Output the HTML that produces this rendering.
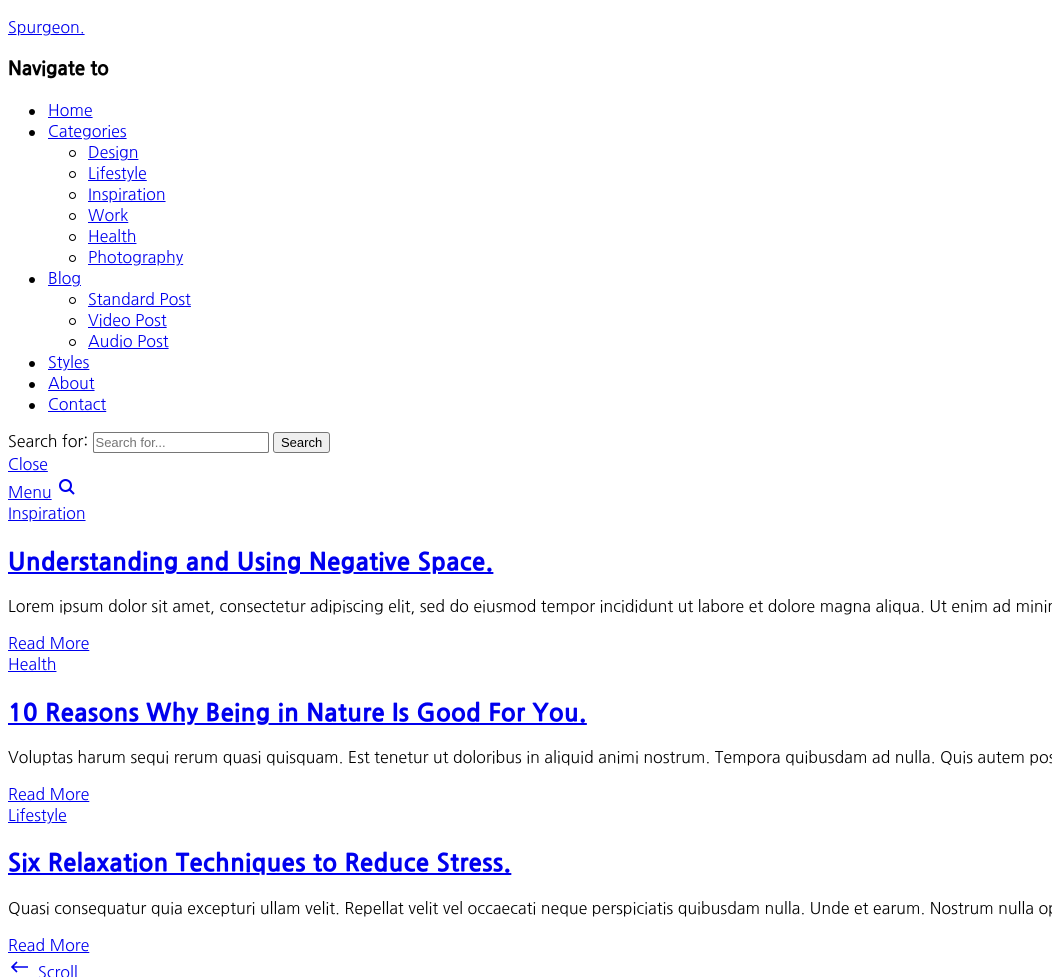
<!DOCTYPE html>
<html><head><meta charset="utf-8"><style>
html,body{margin:0;padding:0;background:#fff;width:1052px;height:977px;overflow:hidden}
body{font-family:"NanumGothic","Liberation Sans",sans-serif;font-size:16px;color:#000;position:relative}
.wrap{position:absolute;left:0;top:1px;width:1052px;height:976px;overflow:hidden}
.a{position:absolute;left:8px;white-space:nowrap;line-height:21px}
a{color:#0000ee;text-decoration:underline}
.l1{left:48px}.l2{left:88px}
.b1::before{content:"";position:absolute;left:-19px;top:8px;width:6px;height:6px;border-radius:50%;background:#000}
.b2::before{content:"";position:absolute;left:-19px;top:7px;width:5px;height:5px;border-radius:50%;border:1px solid #000}
h3{font-size:19px;font-weight:bold;margin:0;-webkit-text-stroke:0.5px #000}
.h2{font-size:24px;font-weight:bold;line-height:30px;letter-spacing:0.5px;-webkit-text-stroke:0.7px #0000ee}
input{font:13px "Liberation Sans",sans-serif;width:170px;height:17px;padding:1px 2px;border:1px solid #767676;border-radius:2px;vertical-align:middle}
button{font:13px "Liberation Sans",sans-serif;height:21px;padding:0 7px;border:1px solid #767676;border-radius:3px;background:#efefef;vertical-align:middle}
</style></head><body><div class="wrap">
<div class="a" style="top:17px"><a href="#">Spurgeon.</a></div>
<div class="a" style="top:57px"><h3>Navigate to</h3></div>
<div class="a l1 b1" style="top:100px"><a href="#">Home</a></div>
<div class="a l1 b1" style="top:121px"><a href="#">Categories</a></div>
<div class="a l2 b2" style="top:142px"><a href="#">Design</a></div>
<div class="a l2 b2" style="top:163px"><a href="#">Lifestyle</a></div>
<div class="a l2 b2" style="top:184px"><a href="#">Inspiration</a></div>
<div class="a l2 b2" style="top:205px"><a href="#">Work</a></div>
<div class="a l2 b2" style="top:226px"><a href="#">Health</a></div>
<div class="a l2 b2" style="top:247px"><a href="#">Photography</a></div>
<div class="a l1 b1" style="top:268px"><a href="#">Blog</a></div>
<div class="a l2 b2" style="top:289px"><a href="#">Standard Post</a></div>
<div class="a l2 b2" style="top:310px"><a href="#">Video Post</a></div>
<div class="a l2 b2" style="top:331px"><a href="#">Audio Post</a></div>
<div class="a l1 b1" style="top:352px"><a href="#">Styles</a></div>
<div class="a l1 b1" style="top:373px"><a href="#">About</a></div>
<div class="a l1 b1" style="top:394px"><a href="#">Contact</a></div>
<div class="a" style="top:431px">Search for: <input placeholder="Search for..."> <button>Search</button></div>
<div class="a" style="top:454px"><a href="#">Close</a></div>
<div class="a" style="top:482px"><a href="#">Menu</a></div>
<svg style="position:absolute;left:58px;top:477px" width="18" height="18" viewBox="0 0 18 18" fill="none" stroke="#0000ee" stroke-width="2"><circle cx="7.5" cy="7.5" r="5.5"/><path d="M11.5 11.5L16 16"/></svg>
<div class="a" style="top:503px"><a href="#">Inspiration</a></div>
<div class="a h2" style="top:546px"><a href="#">Understanding and Using Negative Space.</a></div>
<div class="a" style="top:596px">Lorem ipsum dolor sit amet, consectetur adipiscing elit, sed do eiusmod tempor incididunt ut labore et dolore magna aliqua. Ut enim ad minim veniam</div>
<div class="a" style="top:633px"><a href="#">Read More</a></div>
<div class="a" style="top:654px"><a href="#">Health</a></div>
<div class="a h2" style="top:697px"><a href="#">10 Reasons Why Being in Nature Is Good For You.</a></div>
<div class="a" style="top:747px">Voluptas harum sequi rerum quasi quisquam. Est tenetur ut doloribus in aliquid animi nostrum. Tempora quibusdam ad nulla. Quis autem possimus</div>
<div class="a" style="top:784px"><a href="#">Read More</a></div>
<div class="a" style="top:805px"><a href="#">Lifestyle</a></div>
<div class="a h2" style="top:847px"><a href="#">Six Relaxation Techniques to Reduce Stress.</a></div>
<div class="a" style="top:898px">Quasi consequatur quia excepturi ullam velit. Repellat velit vel occaecati neque perspiciatis quibusdam nulla. Unde et earum. Nostrum nulla optio</div>
<div class="a" style="top:935px"><a href="#">Read More</a></div>
<svg style="position:absolute;left:10px;top:959px" width="20" height="14" viewBox="0 0 20 14" fill="none" stroke="#0000ee" stroke-width="1.6"><path d="M18 7H2M7 2L2 7L7 12"/></svg>
<div class="a" style="top:962px;left:38px"><a href="#">Scroll</a></div>
</div></body></html>
